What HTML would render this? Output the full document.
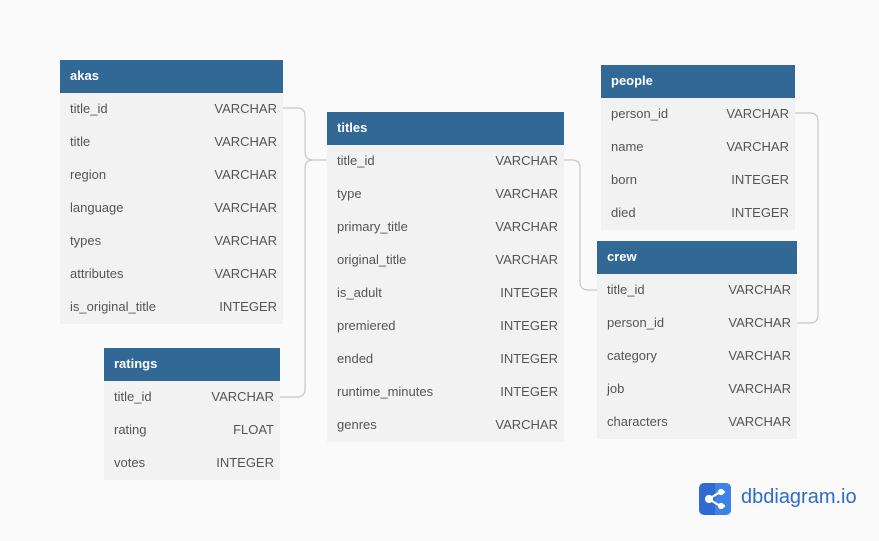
<!DOCTYPE html><html><head><style>
body{margin:0;width:879px;height:541px;background:#fafafa;font-family:"Liberation Sans",sans-serif;position:relative;overflow:hidden}
.t{position:absolute;background:#f2f2f2}
.h{background:#316896;color:#fff;font-weight:bold;font-size:13px;height:33px;line-height:31px;padding-left:10px}
.r{height:33px;line-height:31px;font-size:13px;color:#555;padding:0 6px 0 10px;display:flex;justify-content:space-between}
</style></head><body>
<svg style="position:absolute;left:0;top:0" width="879" height="541" fill="none" stroke="#c8c8c8" stroke-width="1.2">
<path d="M283 108 H297 Q305 108 305 116 V152 Q305 160 313 160 H327"/>
<path d="M280 397 H297 Q305 397 305 389 V168 Q305 160 313 160"/>
<path d="M564 160 H572 Q580 160 580 168 V282 Q580 290 588 290 H597"/>
<path d="M795 113 H810 Q818 113 818 121 V315 Q818 323 810 323 H797"/>
</svg>
<div class="t" style="left:60px;top:60px;width:223px"><div class="h">akas</div>
<div class="r"><span>title_id</span><span>VARCHAR</span></div><div class="r"><span>title</span><span>VARCHAR</span></div><div class="r"><span>region</span><span>VARCHAR</span></div><div class="r"><span>language</span><span>VARCHAR</span></div><div class="r"><span>types</span><span>VARCHAR</span></div><div class="r"><span>attributes</span><span>VARCHAR</span></div><div class="r"><span>is_original_title</span><span>INTEGER</span></div></div>
<div class="t" style="left:327px;top:112px;width:237px"><div class="h">titles</div>
<div class="r"><span>title_id</span><span>VARCHAR</span></div><div class="r"><span>type</span><span>VARCHAR</span></div><div class="r"><span>primary_title</span><span>VARCHAR</span></div><div class="r"><span>original_title</span><span>VARCHAR</span></div><div class="r"><span>is_adult</span><span>INTEGER</span></div><div class="r"><span>premiered</span><span>INTEGER</span></div><div class="r"><span>ended</span><span>INTEGER</span></div><div class="r"><span>runtime_minutes</span><span>INTEGER</span></div><div class="r"><span>genres</span><span>VARCHAR</span></div></div>
<div class="t" style="left:601px;top:65px;width:194px"><div class="h">people</div>
<div class="r"><span>person_id</span><span>VARCHAR</span></div><div class="r"><span>name</span><span>VARCHAR</span></div><div class="r"><span>born</span><span>INTEGER</span></div><div class="r"><span>died</span><span>INTEGER</span></div></div>
<div class="t" style="left:597px;top:241px;width:200px"><div class="h">crew</div>
<div class="r"><span>title_id</span><span>VARCHAR</span></div><div class="r"><span>person_id</span><span>VARCHAR</span></div><div class="r"><span>category</span><span>VARCHAR</span></div><div class="r"><span>job</span><span>VARCHAR</span></div><div class="r"><span>characters</span><span>VARCHAR</span></div></div>
<div class="t" style="left:104px;top:348px;width:176px"><div class="h">ratings</div>
<div class="r"><span>title_id</span><span>VARCHAR</span></div><div class="r"><span>rating</span><span>FLOAT</span></div><div class="r"><span>votes</span><span>INTEGER</span></div></div>
<svg style="position:absolute;left:699px;top:483px" width="32" height="32" viewBox="0 0 32 32">
<rect width="32" height="32" rx="5" fill="#2f6bd0"/><path d="M16 0H27a5 5 0 0 1 5 5V27a5 5 0 0 1-5 5H16z" fill="#3d82e6"/>
<g stroke="#fff" stroke-width="2.2" fill="#fff"><path d="M10 16 L21 9 M10 16 L21 23 M21 9 H26 M21 23H26" fill="none"/><circle cx="10" cy="16" r="3"/><circle cx="22" cy="9" r="2"/><circle cx="22" cy="23" r="2"/></g></svg>
<div style="position:absolute;left:741px;top:486px;font-size:20px;color:#2f6bc8">dbdiagram.io</div>
</body></html>
